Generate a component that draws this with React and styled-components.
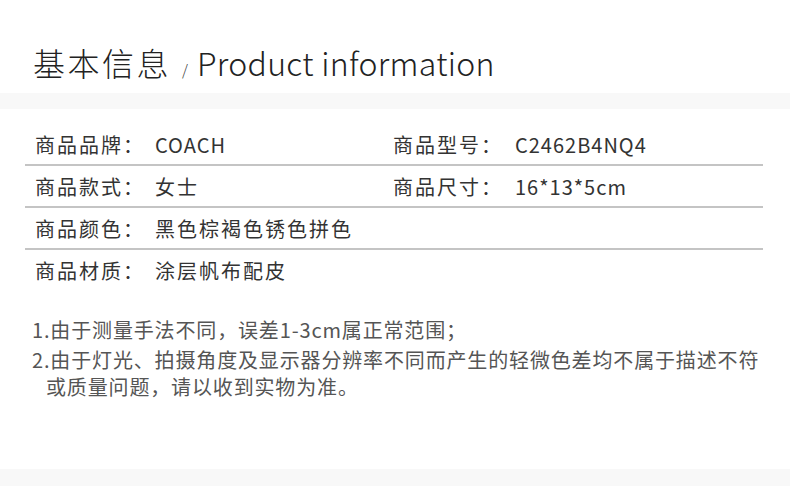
import styled, {createGlobalStyle} from 'styled-components'

const GlobalStyle = createGlobalStyle`
  html, body {
    margin: 0;
    padding: 0;
    background: #fff;
  }
  body {
    font-family: "Noto Sans CJK SC", "Noto Sans", sans-serif;
  }
`

const Page = styled.div`
  display: flex;
  flex-direction: column;
  width: 790px;
  height: 486px;
  overflow: hidden;
`

const Title = styled.h1`
  margin: 42px 0 0 33px;
  height: 40px;
  display: flex;
  align-items: baseline;
  font-size: 32px;
  line-height: 40px;
  font-weight: 300;
  color: #222;
`

const TitleZh = styled.span`
  letter-spacing: 2.5px;
`

const TitleEn = styled.span`
  letter-spacing: 0.3px;
`

const Slash = styled.span`
  font-size: 15px;
  margin: 0 9px 0 11px;
  color: #333;
`

const Band = styled.div`
  height: ${props => props.h}px;
  background: #f8f8f8;
  margin-top: ${props => props.mt};
`

const Table = styled.div`
  margin: 15px 27px 0 25px;
`

const Row = styled.div`
  display: grid;
  grid-template-columns: 358px 1fr;
  padding-left: 10px;
  height: 40px;
  border-bottom: ${props => (props.last ? 'none' : '2px solid #c4c4c4')};
`

const Cell = styled.div`
  display: flex;
  align-items: center;
  font-size: 20px;
  color: #333;
  white-space: nowrap;
`

const Label = styled.span`
  width: ${props => props.w}px;
  flex: none;
  letter-spacing: 2px;
`

const Value = styled.span`
  letter-spacing: ${props => (props.latin ? 1 : 2)}px;
`

const Notes = styled.div`
  margin: 26px 0 0 32px;
  font-size: 20px;
  line-height: 27px;
  letter-spacing: 0.85px;
  color: #555;
`

const Note = styled.p`
  margin: 0 0 3px;
  padding-left: 14px;
  text-indent: -14px;
  white-space: nowrap;
`

const ROWS = [
  [['商品品牌：', 'COACH', true], ['商品型号：', 'C2462B4NQ4', true]],
  [['商品款式：', '女士'], ['商品尺寸：', '16*13*5cm', true]],
  [['商品颜色：', '黑色棕褐色锈色拼色']],
  [['商品材质：', '涂层帆布配皮']],
]

export default function App() {
  return (
    <Page>
      <GlobalStyle />
      <Title>
        <TitleZh>基本信息</TitleZh>
        <Slash>/</Slash>
        <TitleEn>Product information</TitleEn>
      </Title>
      <Band h={16} mt="11px" />
      <Table>
        {ROWS.map((cells, i) => (
          <Row key={i} last={i === ROWS.length - 1}>
            {cells.map(([label, value, latin], j) => (
              <Cell key={j}>
                <Label w={j === 0 ? 120 : 122}>{label}</Label>
                <Value latin={latin}>{value}</Value>
              </Cell>
            ))}
          </Row>
        ))}
      </Table>
      <Notes>
        <Note>1.由于测量手法不同，误差1-3cm属正常范围；</Note>
        <Note>
          2.由于灯光、拍摄角度及显示器分辨率不同而产生的轻微色差均不属于描述不符
          <br />
          或质量问题，请以收到实物为准。
        </Note>
      </Notes>
      <Band h={17} mt="auto" />
    </Page>
  )
}
